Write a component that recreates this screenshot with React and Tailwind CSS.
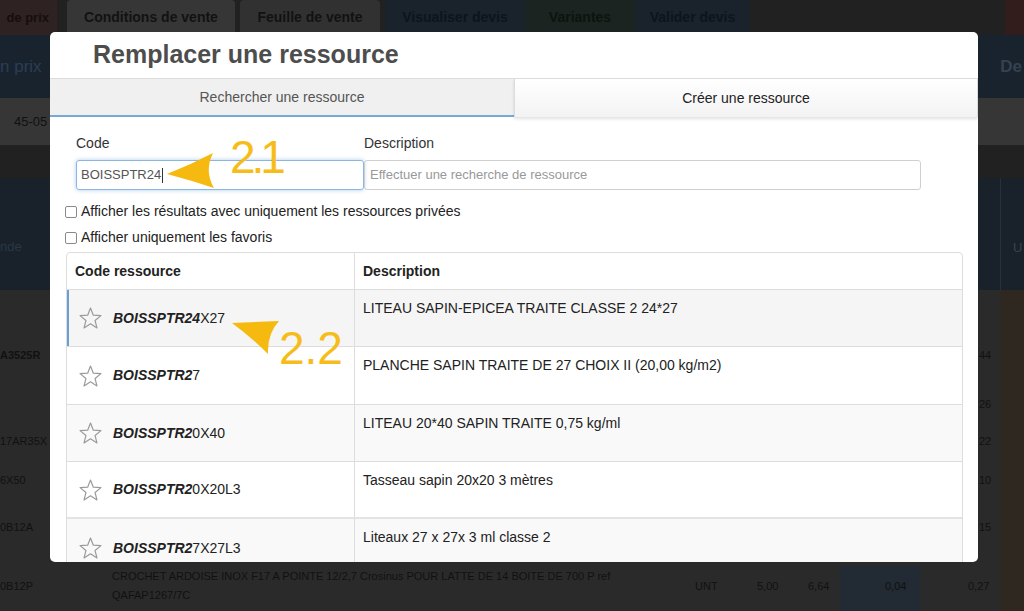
import React from "react";

function Star() {
  return (
    <svg width="23" height="22" viewBox="0 0 22 21" className="shrink-0">
      <polygon
        points="11,1 13.7,7.78 20.99,8.26 15.37,12.92 17.17,20 11,16.1 4.83,20 6.63,12.92 1.01,8.26 8.3,7.78"
        fill="none"
        stroke="#9a9a9a"
        strokeWidth="1.15"
        strokeLinejoin="round"
      />
    </svg>
  );
}

const rows = [
  { b: "BOISSPTR24", r: "X27", d: "LITEAU SAPIN-EPICEA TRAITE CLASSE 2 24*27", bg: "bg-[#f5f5f5]", h: "h-[57px]", sel: true },
  { b: "BOISSPTR2", r: "7", d: "PLANCHE SAPIN TRAITE DE 27 CHOIX II (20,00 kg/m2)", bg: "bg-white", h: "h-[58px]" },
  { b: "BOISSPTR2", r: "0X40", d: "LITEAU 20*40 SAPIN TRAITE 0,75 kg/ml", bg: "bg-[#f9f9f9]", h: "h-[57px]" },
  { b: "BOISSPTR2", r: "0X20L3", d: "Tasseau sapin 20x20 3 mètres", bg: "bg-white", h: "h-[56px]" },
  { b: "BOISSPTR2", r: "7X27L3", d: "Liteaux 27 x 27x 3 ml classe 2", bg: "bg-[#f9f9f9]", h: "h-[60px]", dbl: true },
];

function BgRow({ mt, left, right, bold }) {
  return (
    <div className={`flex h-[20px] items-center ${mt}`}>
      <div className={`w-[979px] text-[11px] text-[#111] ${bold ? "font-bold" : ""}`}>{left}</div>
      <div className="text-[11px] text-[#111]">{right}</div>
    </div>
  );
}

export default function App() {
  return (
    <div className="relative h-[611px] w-[1024px] overflow-hidden bg-[#282828] font-['Liberation_Sans',Arial,sans-serif]">
      {/* background page */}
      <div className="flex h-[35px] bg-[#212121]">
        <div className="flex w-[57px] items-center justify-end overflow-hidden whitespace-nowrap bg-[#2f2222] pr-[8px] text-[13px] font-bold text-[#160e0e]">de prix</div>
        <div className="w-[10px]" />
        <div className="flex w-[168px] items-center justify-center rounded-t-[4px] bg-[#363636] text-[14px] font-bold text-[#121212]">Conditions de vente</div>
        <div className="w-[5px]" />
        <div className="flex w-[140px] items-center justify-center rounded-t-[4px] bg-[#313131] text-[14px] font-bold text-[#121212]">Feuille de vente</div>
        <div className="w-[5px]" />
        <div className="flex w-[140px] items-center justify-center bg-[#1a222c] text-[14px] font-bold text-[#0c141e]">Visualiser devis</div>
        <div className="flex w-[110px] items-center justify-center bg-[#1b2420] text-[14px] font-bold text-[#0c140e]">Variantes</div>
        <div className="flex w-[115px] items-center justify-center bg-[#1a222c] text-[14px] font-bold text-[#0c141e]">Valider devis</div>
        <div className="flex-1" />
        <div className="w-[19px] bg-[#331c1c]" />
      </div>
      <div className="flex h-[63px] items-center justify-between bg-[#19232e] text-[17px] text-[#2a3d55]">
        <span>n prix</span>
        <span className="pr-[2px] font-bold text-[#34424f]">De</span>
      </div>
      <div className="flex h-[47px] items-center bg-[#363636] pl-[14px] text-[13px] text-[#111]">45-05</div>
      <div className="h-[33px] bg-[#212121]" />
      <div className="flex h-[112px] bg-[#19222b]">
        <div className="flex w-[1000px] flex-col justify-end">
          <div className="pb-[34px] text-[13px] text-[#2a3746]">nde</div>
        </div>
        <div className="flex flex-col border-l border-[#27313c] pl-[12px] pt-[60px] text-[13px] text-[#36434f]">U</div>
      </div>
      <div className="flex h-[321px]">
        <div className="relative w-[1000px] bg-[#2a2a2a]">
          <BgRow mt="mt-[55px]" left="A3525R" right="44" bold />
          <BgRow mt="mt-[29px]" left="" right="26" />
          <BgRow mt="mt-[17px]" left="17AR35X" right="22" />
          <BgRow mt="mt-[19px]" left="6X50" right="10" />
          <BgRow mt="mt-[27px]" left="0B12A" right="15" />
          <div className="mt-[29px] flex h-[45px] text-[11px] text-[#111]">
            <div className="w-[112px] pt-[12px]">0B12P</div>
            <div className="w-[583px] pt-[1px] leading-[19px]">
              <div className="whitespace-nowrap">CROCHET ARDOISE INOX F17 A POINTE 12/2,7 Crosinus POUR LATTE DE 14 BOITE DE 700 P ref</div>
              <div>QAFAP1267/7C</div>
            </div>
            <div className="w-[62px] pt-[12px]">UNT</div>
            <div className="w-[51px] pt-[12px]">5,00</div>
            <div className="w-[32px] pt-[12px]">6,64</div>
            <div className="w-[80px] bg-[#222a33] pl-[45px] pt-[12px]">0,04</div>
            <div className="pl-[48px] pt-[12px]">0,27</div>
          </div>
        </div>
        <div className="flex-1 bg-[#2f2820]" />
      </div>

      {/* modal */}
      <div className="absolute left-[50px] top-[32px] flex h-[530px] w-[928px] flex-col overflow-hidden rounded-[5px] bg-white">
        <div className="flex h-[46px] shrink-0 items-center pb-[2px] pl-[43px]">
          <h1 className="text-[25px] font-bold leading-none text-[#4d4d4d]">Remplacer une ressource</h1>
        </div>
        <div className="flex h-[39px] shrink-0 border-t border-[#dcdcdc]">
          <div className="flex w-[464px] items-center justify-center border-b-2 border-[#78a9d4] bg-[#f0f0f0] pt-[1px] text-[14px] text-[#555]">
            Rechercher une ressource
          </div>
          <div className="flex flex-1 items-center justify-center border-l border-r border-[#dcdcdc] bg-gradient-to-b from-white to-[#f3f3f3] text-[14px] text-[#222] shadow-[0_2px_3px_rgba(0,0,0,0.12)]">
            Créer une ressource
          </div>
        </div>

        <div className="flex pl-[26px] pt-[16px]">
          <div className="w-[288px]">
            <div className="h-[20px] text-[14px] leading-[20px] text-[#333]">Code</div>
            <div className="mt-[7px] flex h-[30px] items-center rounded-[3px] border border-[#8ab5de] pl-[4px] text-[13px] text-[#555] shadow-[0_0_4px_rgba(102,160,220,0.55)]">
              BOISSPTR24
              <span className="ml-[1px] inline-block h-[15px] w-[1px] bg-[#333]" />
            </div>
          </div>
          <div className="w-[557px]">
            <div className="h-[20px] text-[14px] leading-[20px] text-[#333]">Description</div>
            <div className="mt-[7px] flex h-[30px] items-center rounded-[3px] border border-[#cfcfcf] pl-[5px] text-[13px] text-[#999]">
              Effectuer une recherche de ressource
            </div>
          </div>
        </div>

        <div className="mt-[11px] flex h-[20px] items-center gap-[4px] pl-[15px] text-[14px] text-[#222]">
          <span className="mt-[2px] inline-block h-[12px] w-[12px] rounded-[2px] border border-[#8a8a8a] bg-white" />
          Afficher les résultats avec uniquement les ressources privées
        </div>
        <div className="mt-[6px] flex h-[20px] items-center gap-[4px] pl-[15px] text-[14px] text-[#222]">
          <span className="mt-[2px] inline-block h-[12px] w-[12px] rounded-[2px] border border-[#8a8a8a] bg-white" />
          Afficher uniquement les favoris
        </div>

        <div className="ml-[16px] mt-[5px] w-[897px] rounded-t-[4px] border border-[#dddddd]">
          <div className="flex h-[36px] text-[14px] font-bold text-[#222]">
            <div className="flex w-[288px] items-center border-r border-[#dddddd] pl-[8px]">Code ressource</div>
            <div className="flex items-center pl-[8px]">Description</div>
          </div>
          {rows.map((r, i) => (
            <div
              key={i}
              className={`flex ${r.h} ${r.bg} ${r.dbl ? "border-t-[2px] border-[#e3e3e3]" : "border-t border-[#dddddd]"}`}
            >
              <div
                className={`flex w-[288px] items-center gap-[11px] border-r border-[#dddddd] pl-[12px] ${r.sel ? "shadow-[inset_2px_0_0_#6a9fd3]" : ""}`}
              >
                <Star />
                <span className="text-[14px] text-[#222]">
                  <b className="italic">{r.b}</b>
                  {r.r}
                </span>
              </div>
              <div className="pl-[8px] pt-[8px] text-[14px] leading-[20px] text-[#222]">{r.d}</div>
            </div>
          ))}
        </div>
      </div>

      {/* annotations */}
      <svg className="pointer-events-none absolute left-0 top-0" width="1024" height="611" viewBox="0 0 1024 611">
        <path d="M167,174 Q190,165 213,153 Q204,171 214,188 Q190,180 167,174 Z" fill="#f6b90f" />
        <path d="M232,323 L279,321 Q267,334 268,354 Q251,337 232,323 Z" fill="#f6b90f" />
      </svg>
      <div className="pointer-events-none absolute left-[230px] top-[134px] text-[46px] leading-none tracking-[-4px] text-[#f6bd1a]">2.1</div>
      <div className="pointer-events-none absolute left-[279px] top-[325px] text-[46px] leading-none text-[#f6bd1a]">2.2</div>
    </div>
  );
}
